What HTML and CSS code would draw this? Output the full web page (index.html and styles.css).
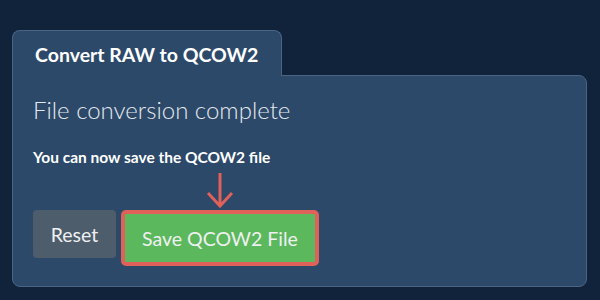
FILE: index.html
```html
<!DOCTYPE html>
<html lang="en">
<head>
    <meta charset="UTF-8">
    <meta name="viewport" content="width=device-width, initial-scale=1.0">
    <title>Convert RAW to QCOW2</title>
    <link rel="stylesheet" href="styles.css">
</head>
<body>

<div class="tabs">
    <div class="tab active">Convert RAW to QCOW2</div>
</div>

<div class="panel">
    <h2>File conversion complete</h2>
    <p class="hint">You can now save the QCOW2 file</p>

    <div class="actions">
        <button type="button" class="btn btn-reset">Reset</button>
        <div class="highlight">
            <!-- pointer arrow above the save button -->
            <svg class="pointer" width="28" height="36" viewBox="0 0 28 36">
                <path d="M14 1 L14 34 M2 21 L14 34 L26 21" fill="none" stroke="#e0605a" stroke-width="3"/>
            </svg>
            <button type="button" class="btn btn-save">Save QCOW2 File</button>
        </div>
    </div>
</div>

</body>
</html>
```

FILE: styles.css
```css
body {
    font-family: Lato, "Open Sans", sans-serif;
    background-color: #10233a;
    color: #fff;
    margin: 0;
    padding: 30px 13px 14px 12px;
}
.tabs {
    display: flex;
}
.tab {
    position: relative;
    z-index: 1;
    width: 270px;
    box-sizing: border-box;
    padding: 12px 22px 9px;
    margin-bottom: -1px;
    font-size: 19.5px;
    font-weight: 700;
    line-height: 24px;
    white-space: nowrap;
    background-color: #2c4969;
    border: 1px solid #4a6485;
    border-bottom: none;
    border-radius: 8px 8px 0 0;
}
.panel {
    background-color: #2c4969;
    border: 1px solid #4a6485;
    border-radius: 0 8px 8px 8px;
    padding: 20px 22px 20px 20px;
}
h2 {
    margin: 0 0 23px;
    font-size: 24px;
    font-weight: 300;
    line-height: 1.2;
    color: #e4e8ee;
}
.hint {
    margin: 0 0 44px;
    font-size: 15.5px;
    font-weight: 700;
    line-height: 1.2;
}
.actions {
    display: flex;
    align-items: flex-start;
    gap: 5px;
}
.btn {
    font-family: Lato, "Open Sans", sans-serif;
    font-size: 19.5px;
    font-weight: 400;
    color: #eef0f2;
    border: none;
    cursor: pointer;
}
.btn-reset {
    width: 83px;
    height: 48px;
    background-color: #4e5d6c;
    border-radius: 4px;
}
.highlight {
    position: relative;
}
.pointer {
    position: absolute;
    left: 85px;
    top: -38px;
}
.btn-save {
    width: 198px;
    height: 56px;
    background-color: #5cb85c;
    border: 4px solid #e0605a;
    border-radius: 5px;
}
```
